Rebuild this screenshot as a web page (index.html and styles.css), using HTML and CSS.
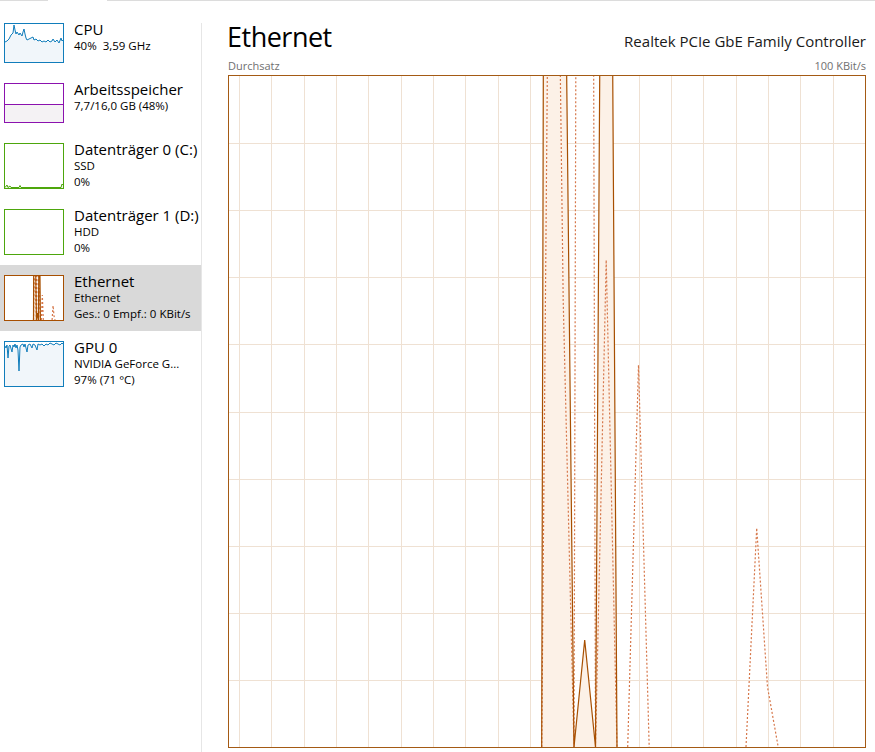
FILE: index.html
```html
<!DOCTYPE html>
<html lang="de">
<head>
    <meta charset="UTF-8">
    <meta name="viewport" content="width=device-width, initial-scale=1.0">
    <title>Task-Manager - Leistung</title>
    <link rel="stylesheet" href="styles.css">
</head>
<body>

    <!-- tab strip border -->
    <div class="topline">
        <span class="seg"></span>
        <span class="gap"></span>
        <span class="seg grow"></span>
    </div>

    <div class="app">

        <!-- Resource list -->
        <nav class="sidebar">
            <div class="item">
                <div class="thumb cpu">
                    <svg width="58" height="38" viewBox="0 0 58 38">
                        <polygon class="fill" points="0,38 0,18 2,17 4,15 5,13 6,11 8,9 9,1 10,6 11,10 12,8 14,11 15,9 17,12 18,8 19,5 20,10 21,14 22,16 24,15 26,14 28,13 29,16 31,15 33,17 35,16 37,18 39,17 41,18 43,16 45,18 47,17 48,15 50,18 52,16 54,19 56,14 57,17 58,16 58,38"/>
                        <polyline class="line" points="0,18 2,17 4,15 5,13 6,11 8,9 9,1 10,6 11,10 12,8 14,11 15,9 17,12 18,8 19,5 20,10 21,14 22,16 24,15 26,14 28,13 29,16 31,15 33,17 35,16 37,18 39,17 41,18 43,16 45,18 47,17 48,15 50,18 52,16 54,19 56,14 57,17 58,16"/>
                    </svg>
                </div>
                <div class="info">
                    <div class="name">CPU</div>
                    <div class="sub">40%&nbsp; 3,59 GHz</div>
                </div>
            </div>

            <div class="item">
                <div class="thumb mem">
                    <svg width="58" height="38" viewBox="0 0 58 38">
                        <rect class="fill" x="0" y="20" width="58" height="18"/>
                        <line class="line" x1="0" y1="20.5" x2="58" y2="20.5"/>
                    </svg>
                </div>
                <div class="info">
                    <div class="name">Arbeitsspeicher</div>
                    <div class="sub">7,7/16,0 GB (48%)</div>
                </div>
            </div>

            <div class="item tall">
                <div class="thumb disk">
                    <svg width="58" height="44" viewBox="0 0 58 44">
                        <polygon class="fill" points="0,44 0,43.5 2,41 3,43.5 5,42 6,43.5 14,43.5 15,41.5 16,43.5 56,43.5 57,40 58,41 58,44"/>
                        <polyline class="line" points="0,43.5 2,41 3,43.5 5,42 6,43.5 14,43.5 15,41.5 16,43.5 56,43.5 57,40 58,41"/>
                    </svg>
                </div>
                <div class="info">
                    <div class="name">Datenträger 0 (C:)</div>
                    <div class="sub">SSD</div>
                    <div class="sub">0%</div>
                </div>
            </div>

            <div class="item tall">
                <div class="thumb disk"></div>
                <div class="info">
                    <div class="name">Datenträger 1 (D:)</div>
                    <div class="sub">HDD</div>
                    <div class="sub">0%</div>
                </div>
            </div>

            <div class="item tall selected">
                <div class="thumb eth">
                    <svg width="58" height="44" viewBox="0 0 638 672" preserveAspectRatio="none">
                        <path class="area" d="M313.7 672 L324.5 -3828 L335.2 -318 L346 672 L356.7 565 L367.5 672 L378.2 -1028 L389 672 Z"/>
                        <path class="dash" vector-effect="non-scaling-stroke" d="M313.7 672 L324.5 -618 L335.2 225 L346 672 L356.7 -3328 L367.5 672 L378.2 185 L389 672 M399.7 672 L410.5 290 L421.2 672 M518 672 L528.7 453 L539.5 612 L550.2 672"/>
                        <path class="solid" vector-effect="non-scaling-stroke" d="M313.7 672 L324.5 -3828 L335.2 -318 L346 672 L356.7 565 L367.5 672 L378.2 -1028 L389 672"/>
                    </svg>
                </div>
                <div class="info">
                    <div class="name">Ethernet</div>
                    <div class="sub">Ethernet</div>
                    <div class="sub">Ges.: 0 Empf.: 0 KBit/s</div>
                </div>
            </div>

            <div class="item tall">
                <div class="thumb gpu">
                    <svg width="58" height="44" viewBox="0 0 58 44">
                        <polygon class="fill" points="0,44 0,4 1,6 2,3 3,16 4,4 5,3 7,10 8,3 9,5 10,2 11,6 12,3 13,8 14,29 15,5 16,3 18,2 19,5 20,2 22,10 23,3 25,2 27,6 28,2 30,3 32,8 33,2 35,3 37,2 39,4 41,2 43,3 45,1 47,2 49,3 51,1 53,2 55,3 57,1 58,2 58,44"/>
                        <polyline class="line" points="0,4 1,6 2,3 3,16 4,4 5,3 7,10 8,3 9,5 10,2 11,6 12,3 13,8 14,29 15,5 16,3 18,2 19,5 20,2 22,10 23,3 25,2 27,6 28,2 30,3 32,8 33,2 35,3 37,2 39,4 41,2 43,3 45,1 47,2 49,3 51,1 53,2 55,3 57,1 58,2"/>
                    </svg>
                </div>
                <div class="info">
                    <div class="name">GPU 0</div>
                    <div class="sub">NVIDIA GeForce G...</div>
                    <div class="sub">97% (71 °C)</div>
                </div>
            </div>
        </nav>

        <div class="divider"></div>

        <!-- Detail view -->
        <main class="detail">
            <header class="detail-head">
                <h1>Ethernet</h1>
                <div class="adapter">Realtek PCIe GbE Family Controller</div>
            </header>

            <div class="chart-labels">
                <span>Durchsatz</span>
                <span>100 KBit/s</span>
            </div>

            <svg class="chart" width="638" height="673" viewBox="0 0 638 673">
                <path class="grid" d="M1 68.5H637M1 135.5H637M1 202.5H637M1 269.5H637M1 337.5H637M1 404.5H637M1 471.5H637M1 538.5H637M1 605.5H637
                    M11.5 1V672M43.5 1V672M76.5 1V672M108.5 1V672M140.5 1V672M173.5 1V672M205.5 1V672M237.5 1V672M270.5 1V672M302.5 1V672
                    M333.5 1V672M378.5 1V672M411.5 1V672M443.5 1V672M475.5 1V672M508.5 1V672M540.5 1V672M572.5 1V672M605.5 1V672"/>
                <!-- send / receive traces -->
                <path class="area" d="M313.7 672 L324.5 -3828 L335.2 -318 L346 672 L356.7 565 L367.5 672 L378.2 -1028 L389 672 Z"/>
                <path class="dash" d="M313.7 672 L324.5 -618 L335.2 225 L346 672 L356.7 -3328 L367.5 672 L378.2 185 L389 672 M399.7 672 L410.5 290 L421.2 672 M518 672 L528.7 453 L539.5 612 L550.2 672"/>
                <path class="solid" d="M313.7 672 L324.5 -3828 L335.2 -318 L346 672 L356.7 565 L367.5 672 L378.2 -1028 L389 672"/>
                <rect class="frame" x="0.5" y="0.5" width="637" height="672"/>
            </svg>
        </main>

    </div>

</body>
</html>
```

FILE: styles.css
```css
body {
    margin: 0;
    font-family: "Segoe UI", "Open Sans", sans-serif;
    color: #000;
    background-color: #fff;
    overflow: hidden;
}

/* tab strip border */
.topline {
    display: flex;
    height: 1px;
}
.topline .seg {
    width: 48px;
    background-color: #dcdcdc;
}
.topline .gap {
    width: 59px;
}
.topline .grow {
    flex: 1;
}

.app {
    display: flex;
    height: 751px;
}

/* sidebar */
.sidebar {
    width: 201px;
    flex-shrink: 0;
    padding-top: 12px;
    box-sizing: border-box;
}
.item {
    display: flex;
    gap: 10px;
    height: 60px;
    padding: 10px 0 0 4px;
    box-sizing: border-box;
}
.item.tall {
    height: 66px;
}
.item.selected {
    background-color: #d9d9d9;
}
.thumb {
    width: 60px;
    height: 40px;
    flex-shrink: 0;
    border: 1px solid;
    box-sizing: border-box;
    background-color: #fff;
}
.tall .thumb {
    height: 46px;
}
.thumb svg {
    display: block;
    overflow: hidden;
}
.thumb .line {
    fill: none;
    stroke-width: 1;
}

.cpu, .gpu {
    border-color: #117dbb;
}
.cpu .line, .gpu .line {
    stroke: #117dbb;
}
.cpu .fill, .gpu .fill {
    fill: #f1f6fa;
}
.mem {
    border-color: #8b12ae;
}
.mem .line {
    stroke: #8b12ae;
}
.mem .fill {
    fill: #f4f2f4;
}
.disk {
    border-color: #4da60c;
}
.disk .line {
    stroke: #4da60c;
}
.disk .fill {
    fill: #eff7e9;
}
.eth {
    border-color: #a74f01;
}

.info {
    margin-top: -3px;
    white-space: nowrap;
}
.name {
    font-size: 15px;
    line-height: 18px;
}
.sub {
    font-size: 11.5px;
    line-height: 16px;
}

.divider {
    width: 1px;
    margin-top: 22px;
    background-color: #e6e6e6;
}

/* detail pane */
.detail {
    flex: 1;
    padding: 18px 9px 0 26px;
}
.detail-head {
    display: flex;
    justify-content: space-between;
    align-items: baseline;
}
h1 {
    margin: 0 0 0 -1px;
    font-size: 27px;
    line-height: 36px;
    font-weight: normal;
    letter-spacing: -0.5px;
}
.adapter {
    font-size: 15px;
    color: #1a1a1a;
}
.chart-labels {
    display: flex;
    justify-content: space-between;
    margin-top: 3px;
    font-size: 11px;
    line-height: 15px;
    color: #707070;
}
.chart {
    display: block;
    margin-top: 2px;
    overflow: hidden;
}

/* traces */
.grid {
    fill: none;
    stroke: #efe1d3;
    stroke-width: 1;
}
.area {
    fill: #fcf1e7;
    stroke: none;
}
.solid {
    fill: none;
    stroke: #a74f01;
    stroke-width: 1.2;
}
.dash {
    fill: none;
    stroke: #d6774a;
    stroke-width: 1.2;
    stroke-dasharray: 2 2;
}
.frame {
    fill: none;
    stroke: #a45a14;
    stroke-width: 1;
}
```
